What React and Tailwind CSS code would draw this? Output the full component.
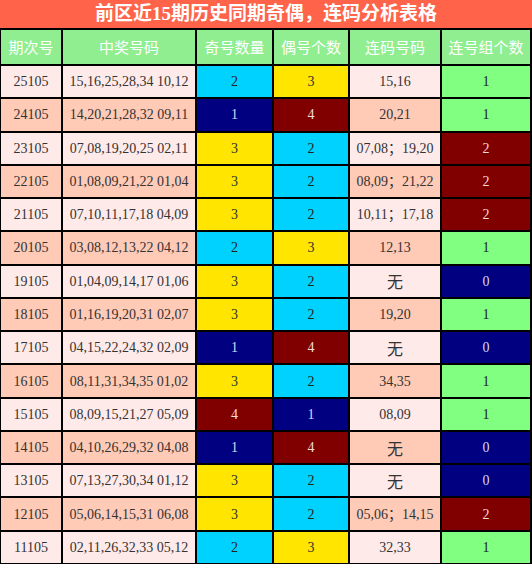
const rows = [
  ['25105', '15,16,25,28,34 10,12', 2, 3, '15,16', 1],
  ['24105', '14,20,21,28,32 09,11', 1, 4, '20,21', 1],
  ['23105', '07,08,19,20,25 02,11', 3, 2, '07,08；19,20', 2],
  ['22105', '01,08,09,21,22 01,04', 3, 2, '08,09；21,22', 2],
  ['21105', '07,10,11,17,18 04,09', 3, 2, '10,11；17,18', 2],
  ['20105', '03,08,12,13,22 04,12', 2, 3, '12,13', 1],
  ['19105', '01,04,09,14,17 01,06', 3, 2, '无', 0],
  ['18105', '01,16,19,20,31 02,07', 3, 2, '19,20', 1],
  ['17105', '04,15,22,24,32 02,09', 1, 4, '无', 0],
  ['16105', '08,11,31,34,35 01,02', 3, 2, '34,35', 1],
  ['15105', '08,09,15,21,27 05,09', 4, 1, '08,09', 1],
  ['14105', '04,10,26,29,32 04,08', 1, 4, '无', 0],
  ['13105', '07,13,27,30,34 01,12', 3, 2, '无', 0],
  ['12105', '05,06,14,15,31 06,08', 3, 2, '05,06；14,15', 2],
  ['11105', '02,11,26,32,33 05,12', 2, 3, '32,33', 1],
]

const headers = ['期次号', '中奖号码', '奇号数量', '偶号个数', '连码号码', '连号组个数']

// 奇偶数量的颜色
const countColor = {
  1: 'bg-[#000080] text-[#d8d8f0]',
  2: 'bg-[#00d2ff] text-[#222]',
  3: 'bg-[#ffe500] text-[#333]',
  4: 'bg-[#800000] text-[#f0dcdc]',
}

// 连号组个数的颜色
const groupColor = {
  0: 'bg-[#000080] text-[#d8d8f0]',
  1: 'bg-[#80ff80] text-[#222]',
  2: 'bg-[#800000] text-[#f0dcdc]',
}

export default function App() {
  return (
    <div
      className="w-[532px] h-[564px] bg-black pl-px pr-[2px] pb-px grid grid-cols-[60px_132px_75px_74px_90px_88px] grid-rows-[28px_34px_repeat(15,minmax(0,1fr))] gap-[2px] overflow-hidden"
      style={{ fontFamily: '"Liberation Serif", "Noto Sans CJK SC", serif' }}
    >
      <div className="col-span-6 -ml-px -mr-[2px] bg-[#ff634a] text-white font-bold text-[19px] flex items-center justify-center">
        前区近15期历史同期奇偶，连码分析表格
      </div>

      {headers.map(h => (
        <div
          key={h}
          className="bg-[#90ee90] text-white text-[15px] flex items-center justify-center"
          style={{ fontFamily: '"Noto Sans CJK SC", sans-serif' }}
        >
          {h}
        </div>
      ))}

      {rows.map((r, i) => {
        const rowBg = i % 2 === 0 ? 'bg-[#ffeaea]' : 'bg-[#ffcab6]'
        return [
          <div key={r[0] + 'a'} className={`${rowBg} text-[#333] text-[14px] flex items-center justify-center`}>{r[0]}</div>,
          <div key={r[0] + 'b'} className={`${rowBg} text-[#333] text-[14px] flex items-center justify-center`}>{r[1]}</div>,
          <div key={r[0] + 'c'} className={`${countColor[r[2]]} text-[14px] flex items-center justify-center`}>{r[2]}</div>,
          <div key={r[0] + 'd'} className={`${countColor[r[3]]} text-[14px] flex items-center justify-center`}>{r[3]}</div>,
          <div key={r[0] + 'e'} className={`${rowBg} text-[#333] flex items-center justify-center ${r[4] === '无' ? 'text-[16px] pt-1' : 'text-[14px]'}`}>{r[4]}</div>,
          <div key={r[0] + 'f'} className={`${groupColor[r[5]]} text-[14px] flex items-center justify-center`}>{r[5]}</div>,
        ]
      })}
    </div>
  )
}
